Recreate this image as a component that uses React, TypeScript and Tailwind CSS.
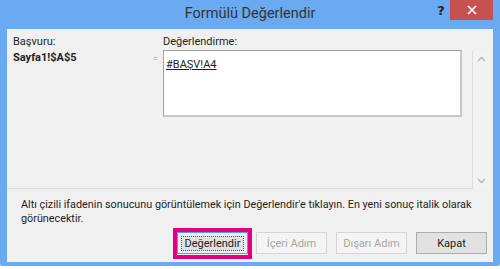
import React from "react";

const font = { fontFamily: "Roboto, 'Open Sans', sans-serif" };

function Btn({ label, disabled, def }: { label: string; disabled?: boolean; def?: boolean }) {
  return (
    <div
      className={
        "w-[71px] h-[22px] flex items-center justify-center text-[11px] leading-none border " +
        (disabled
          ? "border-[#d5d5d5] bg-[#f4f4f4] text-[#a6a6a6]"
          : def
          ? "border-[#569de5] bg-[#e5f1fb] text-[#1e1e1e]"
          : "border-[#adadad] bg-[#e1e1e1] text-[#1e1e1e]")
      }
    >
      {def ? (
        <div className="w-[63px] h-[15px] flex items-center justify-center border border-dotted border-[#555] bg-[#e1e1e1]">
          {label}
        </div>
      ) : (
        label
      )}
    </div>
  );
}

export default function App() {
  return (
    <div className="w-[500px] h-[269px] bg-white" style={font}>
      <div className="w-[500px] h-[266px] bg-[#6aaaf0] flex flex-col px-[7px] pb-[4px] rounded-b-[2px]">
        {/* title bar */}
        <div className="h-[29px] flex items-start shrink-0">
          <div className="w-[61px]" />
          <div className="flex-1 text-center text-[14.5px] text-[#333] pt-[4px] leading-[20px]">Formülü Değerlendir</div>
          <div className="w-[61px] flex items-start">
            <div className="w-[18px] pt-[2px] text-[13px] font-bold text-[#222] text-center leading-[18px]" style={{ fontFamily: "'DejaVu Sans', sans-serif" }}>?</div>
            <div className="w-[43px] h-[20px] bg-[#c75050] flex items-center justify-center">
              <svg width="10" height="10" viewBox="0 0 10 10">
                <path d="M1 1 L9 9 M9 1 L1 9" stroke="white" strokeWidth="1.6" />
              </svg>
            </div>
          </div>
        </div>
        {/* content */}
        <div className="flex-1 bg-[#f0f0f0] flex flex-col">
          <div className="flex h-[160px] shrink-0">
            <div className="flex-1 flex flex-col pl-[6px] border-b border-[#dddddd]">
              <div className="flex pt-[5px]">
                <div className="w-[140px] flex flex-col">
                  <div className="text-[11px] leading-[16px] text-[#1e1e1e]">Başvuru:</div>
                  <div className="text-[11px] leading-[16px] font-bold text-[#1e1e1e]">Sayfa1!$A$5</div>
                </div>
                <div className="w-[10px] pt-[17px] text-[9px] text-[#999] leading-[16px]">=</div>
                <div className="flex flex-col">
                  <div className="text-[11px] leading-[16px] text-[#1e1e1e]">Değerlendirme:</div>
                  <div className="w-[299px] h-[67px] bg-white border border-[#a0a0a0] border-b-2 border-r-2 border-b-[#c8c8c8] border-r-[#c8c8c8] px-[2px]">
                    <span className="text-[11px] leading-[14px] underline text-[#1e1e1e]">#BAŞV!A4</span>
                  </div>
                </div>
              </div>
            </div>
            <div className="w-[17px] border-l border-[#dddddd] mt-[22px] flex flex-col items-center justify-between py-[5px] bg-[#f2f2f2]">
              <svg width="9" height="6" viewBox="0 0 9 6"><path d="M1 5 L4.5 1.5 L8 5" fill="none" stroke="#b5b5b5" strokeWidth="1.3" /></svg>
              <svg width="9" height="6" viewBox="0 0 9 6"><path d="M1 1 L4.5 4.5 L8 1" fill="none" stroke="#b5b5b5" strokeWidth="1.3" /></svg>
            </div>
            <div className="w-[4px]" />
          </div>
          <div className="h-[43px] pl-[14px] pr-[12px] pt-[9px] text-[10.8px] leading-[14px] text-[#1e1e1e]">
            Altı çizili ifadenin sonucunu görüntülemek için Değerlendir'e tıklayın. En yeni sonuç italik olarak görünecektir.
          </div>
          <div className="flex pl-[170px]">
            <div className="relative">
              <Btn label="Değerlendir" def />
              <div className="absolute left-[-4px] top-[-4px] right-[-4px] bottom-[-5px] border-[4px] border-[#e4007f] pointer-events-none" />
            </div>
            <div className="ml-[8px]"><Btn label="İçeri Adım" disabled /></div>
            <div className="ml-[9px]"><Btn label="Dışarı Adım" disabled /></div>
            <div className="ml-[9px]"><Btn label="Kapat" /></div>
          </div>
        </div>
      </div>
    </div>
  );
}
